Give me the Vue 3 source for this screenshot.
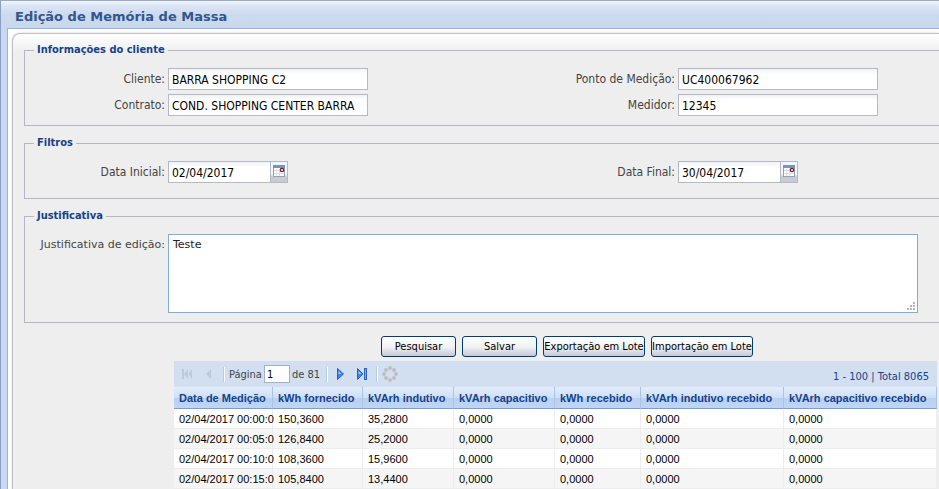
<script setup>
import { ref } from 'vue'

const cliente = ref('BARRA SHOPPING C2')
const contrato = ref('COND. SHOPPING CENTER BARRA')
const ponto = ref('UC400067962')
const medidor = ref('12345')
const dataInicial = ref('02/04/2017')
const dataFinal = ref('30/04/2017')
const justificativa = ref('Teste')
const pagina = ref('1')

const columns = [
  'Data de Medição',
  'kWh fornecido',
  'kVArh indutivo',
  'kVArh capacitivo',
  'kWh recebido',
  'kVArh indutivo recebido',
  'kVArh capacitivo recebido',
]
const zero = '0,0000'
const rows = [
  ['02/04/2017 00:00:0', '150,3600', '35,2800', zero, zero, zero, zero],
  ['02/04/2017 00:05:0', '126,8400', '25,2000', zero, zero, zero, zero],
  ['02/04/2017 00:10:0', '108,3600', '15,9600', zero, zero, zero, zero],
  ['02/04/2017 00:15:0', '105,8400', '13,4400', zero, zero, zero, zero],
]
const dots = [
  [8, 2], [12, 4], [14, 8], [12, 12], [8, 14], [4, 12], [2, 8], [4, 4],
]
</script>

<template>
  <div class="window">
    <header class="titlebar"><h1>Edição de Memória de Massa</h1></header>
    <main class="body">
      <form class="panel" @submit.prevent>
        <fieldset>
          <legend>Informações do cliente</legend>
          <div class="fields">
            <label for="cliente">Cliente:</label>
            <input id="cliente" v-model="cliente" class="text" type="text" />
            <label for="ponto">Ponto de Medição:</label>
            <input id="ponto" v-model="ponto" class="text" type="text" />
            <label for="contrato">Contrato:</label>
            <input id="contrato" v-model="contrato" class="text" type="text" />
            <label for="medidor">Medidor:</label>
            <input id="medidor" v-model="medidor" class="text" type="text" />
          </div>
        </fieldset>

        <fieldset class="filters">
          <legend>Filtros</legend>
          <div class="fields">
            <label for="inicial">Data Inicial:</label>
            <div class="date">
              <input id="inicial" v-model="dataInicial" class="text" type="text" />
              <button type="button" class="trigger" aria-label="Escolher data inicial">
                <svg width="13" height="13" viewBox="0 0 13 13">
                  <rect x="0.5" y="0.5" width="11" height="11" fill="#fff" stroke="#8aa3c4" />
                  <rect x="0" y="0" width="12" height="3" fill="#7595bb" />
                  <path d="M3.5 4v7M6.500 4v7M1 5.500h10M1 8.500h10" stroke="#dbe1eb" />
                  <circle cx="9" cy="5" r="1.700" fill="#fff" stroke="#7d1020" stroke-width="1.200" />
                </svg>
              </button>
            </div>
            <label for="final">Data Final:</label>
            <div class="date">
              <input id="final" v-model="dataFinal" class="text" type="text" />
              <button type="button" class="trigger" aria-label="Escolher data final">
                <svg width="13" height="13" viewBox="0 0 13 13">
                  <rect x="0.5" y="0.5" width="11" height="11" fill="#fff" stroke="#8aa3c4" />
                  <rect x="0" y="0" width="12" height="3" fill="#7595bb" />
                  <path d="M3.5 4v7M6.500 4v7M1 5.500h10M1 8.500h10" stroke="#dbe1eb" />
                  <circle cx="9" cy="5" r="1.700" fill="#fff" stroke="#7d1020" stroke-width="1.200" />
                </svg>
              </button>
            </div>
          </div>
        </fieldset>

        <fieldset>
          <legend>Justificativa</legend>
          <div class="note">
            <label for="justificativa">Justificativa de edição:</label>
            <div class="area">
              <textarea id="justificativa" v-model="justificativa"></textarea>
              <svg class="grip" width="8" height="8" viewBox="0 0 8 8" aria-hidden="true">
                <path d="M6 0h2v2h-2zM3 3h2v2h-2zM6 3h2v2h-2zM0 6h2v2h-2zM3 6h2v2h-2zM6 6h2v2h-2z" fill="#b5b5b5" />
              </svg>
            </div>
          </div>
        </fieldset>

        <div class="actions">
          <button type="button">Pesquisar</button>
          <button type="button">Salvar</button>
          <button type="button" class="wide">Exportação em Lote</button>
          <button type="button" class="wide">Importação em Lote</button>
        </div>

        <section class="grid">
          <div class="pager">
            <button type="button" aria-label="Primeira página" disabled>
              <svg width="16" height="16" viewBox="0 0 16 16">
                <path d="M3 3h2v10H3zM9 3v10L5 8zM13 3v10L9.500 8z" fill="#bccadd" />
              </svg>
            </button>
            <button type="button" aria-label="Página anterior" disabled>
              <svg width="16" height="16" viewBox="0 0 16 16">
                <path d="M10 3v10L5 8z" fill="#bccadd" />
              </svg>
            </button>
            <span class="sep"></span>
            <label for="pagina">Página</label>
            <input id="pagina" v-model="pagina" type="text" />
            <span class="of">de 81</span>
            <span class="sep"></span>
            <button type="button" aria-label="Próxima página">
              <svg width="16" height="16" viewBox="0 0 16 16">
                <path d="M5.500 2.500v11L11.500 8z" fill="#3f86e8" stroke="#2a5fc0" />
                <path d="M6.500 5v3h3z" fill="#9cc8fb" />
              </svg>
            </button>
            <button type="button" aria-label="Última página">
              <svg width="16" height="16" viewBox="0 0 16 16">
                <path d="M3.500 2.500v11L9 8z" fill="#3f86e8" stroke="#2a5fc0" />
                <path d="M4.500 5v3h3z" fill="#9cc8fb" />
                <rect x="10.500" y="2.500" width="2" height="11" fill="#78aef3" stroke="#2a5fc0" />
              </svg>
            </button>
            <span class="sep"></span>
            <button type="button" aria-label="Atualizar">
              <svg width="16" height="16" viewBox="0 0 16 16">
                <circle v-for="(d, i) in dots" :key="i" :cx="d[0]" :cy="d[1]" r="1.900" fill="#bfbdbb" />
              </svg>
            </button>
            <span class="total">1 - 100 | Total 8065</span>
          </div>
          <table>
            <colgroup>
              <col class="c1" /><col class="c2" /><col class="c3" /><col class="c4" />
              <col class="c5" /><col class="c6" /><col />
            </colgroup>
            <thead>
              <tr><th v-for="c in columns" :key="c" scope="col">{{ c }}</th></tr>
            </thead>
            <tbody>
              <tr v-for="r in rows" :key="r[0]">
                <td v-for="(v, i) in r" :key="i">{{ v }}</td>
              </tr>
            </tbody>
          </table>
        </section>
      </form>
    </main>
  </div>
</template>

<style>
body {
  margin: 0;
}
</style>

<style scoped>
.window,
.window * {
  box-sizing: border-box;
}
.window {
  display: flex;
  flex-direction: column;
  height: 100vh;
  overflow: hidden;
  border-top: 1px solid #99abc8;
  border-left: 1px solid #8c9fc4;
  background: #cad9ef;
  font-family: 'DejaVu Sans Condensed', 'DejaVu Sans', sans-serif;
  font-size: 12px;
  color: #444;
}
.titlebar {
  flex: none;
  height: 27px;
  padding: 6px 14px 0;
  background: linear-gradient(#f2f6fe 0, #dbe5f5 5px, #cbdaee 14px, #c9d9ec 100%);
}
h1 {
  margin: 0;
  font: bold 13px/20px 'DejaVu Sans', sans-serif;
  color: #32568f;
}
.body {
  flex: 1;
  min-height: 0;
  margin-left: 6px;
  padding: 4px 0 0 4px;
  border-top: 1px solid #99b1de;
  border-left: 1px solid #99b1de;
  background: #fff;
}
.panel {
  padding: 9px 0 0 11px;
  border: 1px solid #c0c0c0;
  border-width: 1px 0 0 1px;
  border-top-left-radius: 8px;
  background: linear-gradient(#fff 0, #eee 18px);
  box-shadow: 0 0 2px #c8c8c8;
}
fieldset {
  min-width: 0;
  margin: 0 0 10px;
  padding: 11px 0 9px;
  border: 1px solid #b5b8c0;
  border-right: 0;
}
.filters {
  padding-bottom: 15px;
}
legend {
  margin-left: 9px;
  padding: 0 3px;
  font-size: 11px;
  font-weight: bold;
  line-height: 14px;
  color: #15428b;
}
.fields {
  display: grid;
  grid-template-columns: 140px 200px 304px 200px;
  gap: 4px 3px;
}
.fields label {
  text-align: right;
  line-height: 22px;
}
.text {
  width: 100%;
  height: 22px;
  padding: 2px 3px 0;
  border: 1px solid #b5b8c8;
  border-radius: 0;
  background: linear-gradient(#f1f2f5, #fff 5px);
  font: inherit;
  color: #000;
  outline: 0;
}
.date {
  display: flex;
  width: 120px;
}
.date .text {
  flex: 1;
  min-width: 0;
}
.trigger {
  display: flex;
  align-items: flex-start;
  flex: none;
  width: 17px;
  height: 22px;
  padding: 3px 2px;
  border: 1px solid #b5b8c8;
  border-left: 0;
  background: linear-gradient(#f5f6f8 60%, #c9cbd0 75%);
}
.trigger svg,
.pager svg {
  display: block;
  flex: none;
}
.note {
  display: flex;
  gap: 3px;
}
.note label {
  flex: none;
  width: 140px;
  text-align: right;
  font: 11px/22px 'DejaVu Sans', sans-serif;
}
.area {
  position: relative;
  flex: 1;
  height: 79px;
  margin-right: 21px;
}
textarea {
  display: block;
  width: 100%;
  height: 100%;
  padding: 3px 4px;
  border: 1px solid #7eadd9;
  border-radius: 0;
  background: #fff;
  font: 11px/14px 'DejaVu Sans', sans-serif;
  color: #222;
  resize: none;
  outline: 0;
}
.grip {
  position: absolute;
  right: 3px;
  bottom: 3px;
}
.actions {
  display: flex;
  gap: 6px;
  padding: 3px 0 4px 357px;
}
.actions button {
  width: 75px;
  height: 21px;
  padding: 0;
  border: 1px solid #003c74;
  border-radius: 3px;
  background: linear-gradient(#fff, #eef0f3 55%, #c6c8d6);
  font: inherit;
  font-size: 11px;
  color: #000;
  white-space: nowrap;
}
.actions .wide {
  width: 102px;
}
.grid {
  margin: 0 2px 0 150px;
  background: #fff;
}
.pager {
  display: flex;
  align-items: center;
  height: 26px;
  padding-left: 5px;
  background: #d1dff0;
  font-size: 11px;
}
.pager button {
  width: 22px;
  padding: 0;
  border: 0;
  background: none;
}
.sep {
  width: 2px;
  height: 15px;
  margin-right: 4px;
  border-left: 1px solid #b5cbe6;
  border-right: 1px solid #fff;
}
.pager input {
  width: 26px;
  height: 18px;
  margin: 0 2px;
  padding: 0 2px;
  border: 1px solid #9eb2cc;
  background: #fff;
  font: inherit;
  color: #000;
}
.of {
  margin-right: 6px;
}
.total {
  margin-left: auto;
  padding: 5px 8px 0 0;
  color: #15428b;
}
table {
  width: 100%;
  table-layout: fixed;
  border-collapse: separate;
  border-spacing: 0;
  font: 11px 'Liberation Sans', sans-serif;
}
.c1 { width: 99px; }
.c2 { width: 90px; }
.c3 { width: 91px; }
.c4 { width: 101px; }
.c5 { width: 86px; }
.c6 { width: 143px; }
th {
  height: 22px;
  padding: 0 0 0 5px;
  border-right: 1px solid #a9c4eb;
  border-bottom: 1px solid #7c9ccb;
  background: linear-gradient(#e3edfb, #cddff7 50%, #b8d0f2 52%, #bfd5f4);
  text-align: left;
  white-space: nowrap;
  color: #15428b;
}
td {
  height: 20px;
  padding: 0 0 0 5px;
  border-right: 1px solid #ededed;
  border-bottom: 1px solid #ededed;
  white-space: nowrap;
  color: #000;
}
tbody tr:nth-child(even) {
  background: #f5f5f5;
}
</style>
